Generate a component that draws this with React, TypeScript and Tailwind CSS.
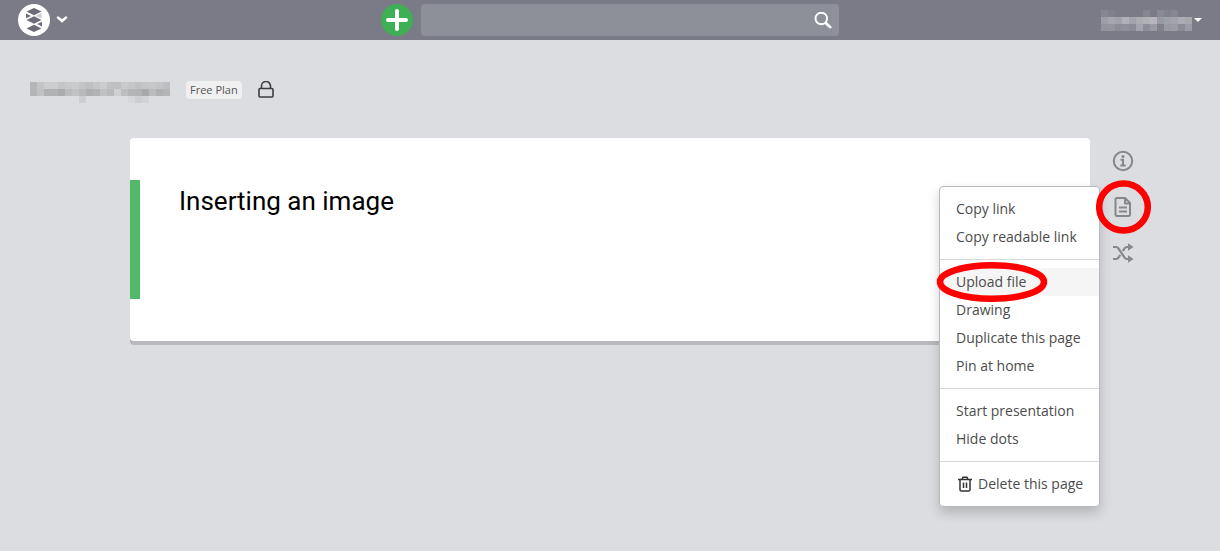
import React, { useState } from 'react';

const USER_BLOCKS = [
  ['#858691', '#80818c', '', '', '', '', '#858691', '', '#888994', '#80818c', '#858691', '', ''],
  ['#9d9ea6', '#a6a6ad', '#a2a2aa', '#b0b0b9', '#a2a2ad', '#acacb3', '#b0b0b7', '#b5b5bb', '#989aa3', '#9fa1a9', '#a2a3ac', '#acacb4', '#a6a7af'],
  ['#92939d', '#94959f', '#8b8c97', '#8e8f99', '#8a8b96', '#a2a3ac', '#8d8e99', '#9a9ba5', '#80818c', '#989aa3', '#9b9ca6', '#8b8c97', '#9b9ca5'],
];

const PROJECT_BLOCKS = [
  ['#b5b6b7', '#c3c4c6', '#cccdcf', '#cccdcf', '#c5c6c8', '#c8c9cb', '#cacbcd', '#c3c4c6', '#bebfc1', '#c6c7c9', '#cbccce', '#c0c1c3', '#bfc0c2', '#c9cacc', '#c5c6c8', '#c0c1c3', '#c4c5c7', '#c6c7c9', '#c3c4c6', '#bebfc1'],
  ['#b3b4b5', '#c0c1c3', '#b1b2b3', '#b1b2b3', '#aaabac', '#bcbdbf', '#c1c2c4', '#b8b9bb', '#adaeaf', '#b2b3b4', '#c0c1c3', '#b9babc', '#cfd0d3', '#bcbdbf', '#b4b5b7', '#b3b4b6', '#a8a9aa', '#bbbcbe', '#b0b1b3', '#b4b5b6'],
  ['', '', '', '', '', '', '', '#ceced1', '', '', '', '', '', '', '#d6d7da', '#cdced0', '#d2d3d6', '', '', ''],
];

const MENU_GROUPS = [
  ['Copy link', 'Copy readable link'],
  ['Upload file', 'Drawing', 'Duplicate this page', 'Pin at home'],
  ['Start presentation', 'Hide dots'],
];

function Mosaic({ rows }: { rows: string[][] }) {
  const width = rows[0].length * 7;
  const height = rows.length * 7;
  return (
    <svg width={width} height={height} viewBox={`0 0 ${width} ${height}`} shapeRendering="crispEdges" aria-hidden="true">
      {rows.map((row, y) =>
        row.map((color, x) =>
          color ? <rect key={`${x}-${y}`} x={x * 7} y={y * 7} width="7" height="7" fill={color} /> : null
        )
      )}
    </svg>
  );
}

function Logo() {
  return (
    <svg width="32" height="32" viewBox="0 0 32 32">
      <circle cx="16" cy="16" r="16" fill="#fff" />
      <g fill="#6b6c77">
        <path d="M16 4l7.500 3.600L16 11.200 8.500 7.600z" />
        <path d="M16 12.200l7.500 3.800-7.500 3.800L8.500 16z" />
        <path d="M16 20.800l7.500 3.600L16 28l-7.500-3.600z" />
        <path d="M8 9.600l4.800 2.300L8 14.200zM14.500 12l2.800-.1 6.200-3v5.600L19 12.600z" opacity=".35" />
        <path d="M8 9.600l4.800 2.300L8 14.200z" />
        <path d="M24 17.800l-4.800 2.300 4.800 2.300z" />
      </g>
    </svg>
  );
}

function TopBar() {
  return (
    <header className="grid h-10 grid-cols-[1fr_458px_1fr] items-center bg-[#7a7b86]">
      <button aria-label="Home menu" className="ml-[18px] flex items-center gap-1.5 justify-self-start">
        <Logo />
        <svg width="12" height="8" viewBox="0 0 12 8" fill="none" stroke="#fff" strokeWidth="2.500" strokeLinecap="round">
          <path d="M2 1.500l4 3.500 4-3.500" />
        </svg>
      </button>
      <div className="flex items-center gap-2">
        <button aria-label="Add page" className="flex size-8 shrink-0 items-center justify-center rounded-full bg-[#3eaf55]">
          <svg width="22" height="22" viewBox="0 0 22 22" stroke="#fff" strokeWidth="4" strokeLinecap="round">
            <path d="M11 2v18M2 11h18" />
          </svg>
        </button>
        <div className="relative flex-1">
          <input
            type="text"
            aria-label="Search"
            className="block h-8 w-full rounded bg-[#8e9099] pr-9 pl-3 text-sm text-white outline-none"
          />
          <svg
            className="absolute top-2 right-[7px]"
            width="18"
            height="18"
            viewBox="0 0 18 18"
            fill="none"
            stroke="#fff"
            strokeLinecap="round"
          >
            <circle cx="7.300" cy="6.500" r="5.800" strokeWidth="1.900" />
            <path d="M12 11.200l4.300 4" strokeWidth="2.600" />
          </svg>
        </div>
      </div>
      <button aria-label="Account" className="mr-[18px] flex items-center gap-0.5 justify-self-end">
        <Mosaic rows={USER_BLOCKS} />
        <svg width="8" height="4" viewBox="0 0 8 4">
          <path d="M0 0h8L4 4z" fill="#fff" />
        </svg>
      </button>
    </header>
  );
}

function PageMenu() {
  return (
    <div className="absolute -top-2.5 right-[34px] z-10 w-[161px] rounded border border-[#b7b9bd] bg-white py-2 text-sm text-[#4c4c4c] shadow-[0_6px_12px_rgba(0,0,0,0.18)]">
      {MENU_GROUPS.map((group) => (
        <div key={group[0]} className="mb-2 border-b border-[#d9d9d9] pb-2">
          {group.map((label) => (
            <button
              key={label}
              className={`block h-7 w-full pl-4 text-left whitespace-nowrap ${label === 'Upload file' ? 'bg-[#f5f5f5]' : ''}`}
            >
              {label}
            </button>
          ))}
        </div>
      ))}
      <button className="flex h-7 w-full items-center gap-1.5 pl-[18px] text-left whitespace-nowrap">
        <svg width="14" height="16" viewBox="0 0 14 16" fill="none" stroke="#333" strokeWidth="1.500">
          <path d="M0 3.500h14M4 3.500L5 1.200h4l1 2.300M2 3.500v10.200q0 1.300 1.300 1.300h7.400q1.300 0 1.300-1.300V3.500M5.500 6.500v5.500M8.500 6.500v5.500" />
        </svg>
        Delete this page
      </button>
      <svg
        className="pointer-events-none absolute top-[74px] -left-1"
        width="113"
        height="42"
        viewBox="0 0 113 42"
        fill="none"
        stroke="#f00"
        strokeWidth="6.500"
      >
        <ellipse cx="56" cy="21" rx="52" ry="16.800" />
      </svg>
    </div>
  );
}

function SideTools() {
  const [menuOpen, setMenuOpen] = useState(true);

  return (
    <div className="flex flex-col items-start gap-6 pt-3 pl-[22px] text-[#86878a]">
      <button aria-label="Page info">
        <svg width="22" height="22" viewBox="0 0 22 22" fill="none" stroke="currentColor" strokeWidth="2">
          <circle cx="11" cy="11" r="9.200" />
          <path d="M8.500 9.800H11v5.500M8.300 15.500h5.400" />
          <circle cx="11" cy="6.500" r="1.500" fill="currentColor" stroke="none" />
        </svg>
      </button>
      <div className="relative">
        <button aria-label="Page menu" aria-expanded={menuOpen} onClick={() => setMenuOpen(!menuOpen)} className="block">
          <svg width="22" height="22" viewBox="0 0 22 22" fill="none" stroke="currentColor" strokeWidth="2" strokeLinejoin="round">
            <path d="M5 2h8l5 5v11.500q0 1.500-1.500 1.500H5Q3.500 20 3.500 18.500v-15Q3.500 2 5 2zM13 2v5.500h5" />
            <path d="M7 11.500h8M7 15.500h8" />
          </svg>
        </button>
        {menuOpen && <PageMenu />}
        <svg
          className="pointer-events-none absolute -top-4 -left-4 z-20 max-w-none"
          width="56"
          height="54"
          viewBox="0 0 56 54"
          fill="none"
          stroke="#f00"
          strokeWidth="6.500"
        >
          <ellipse cx="27.500" cy="27" rx="24.300" ry="23.500" />
        </svg>
      </div>
      <button aria-label="Shuffle">
        <svg width="22" height="22" viewBox="0 0 22 22" fill="none" stroke="currentColor" strokeWidth="2.200">
          <path d="M1 5h3.200q1.300 0 2.200 1.300l6.200 9.400q.9 1.300 2.200 1.300H17M1 17h3.200q1.300 0 2.200-1.300l1.800-2.700M10.800 9l1.800-2.700Q13.500 5 14.800 5H17" />
          <path d="M16 1.300L21.500 5 16 8.700zM16 13.300l5.500 3.700-5.500 3.700z" fill="currentColor" stroke="none" />
        </svg>
      </button>
    </div>
  );
}

export default function App() {
  return (
    <div className="min-h-screen bg-[#dcdde0] font-['Open_Sans',sans-serif]">
      <TopBar />
      <div className="flex h-[98px] items-start gap-4 pt-10 pl-[30px]">
        <div className="pt-[2px]">
          <Mosaic rows={PROJECT_BLOCKS} />
        </div>
        <span className="mt-px rounded-sm bg-[#f0f0f1] px-1 text-[11px] leading-[18px] text-[#555]">Free Plan</span>
        <svg className="mt-px" width="16" height="18" viewBox="0 0 16 18" fill="none" stroke="#3c3d42" strokeWidth="1.600">
          <rect x="1" y="7.500" width="14" height="8.500" rx="1" />
          <path d="M3.500 7.500V5a4.300 4.300 0 0 1 9 0v2.500" />
        </svg>
      </div>
      <main className="grid grid-cols-[130px_1fr_130px]">
        <article className="col-start-2 rounded bg-white py-[42px] shadow-[0_4px_0_#b7b9bc]">
          <div className="min-h-[119px] border-l-[10px] border-[#51b967] pl-[39px]">
            <h1 className="font-[Roboto,sans-serif] text-[26px] leading-[42px] text-black">Inserting an image</h1>
          </div>
        </article>
        <SideTools />
      </main>
    </div>
  );
}
